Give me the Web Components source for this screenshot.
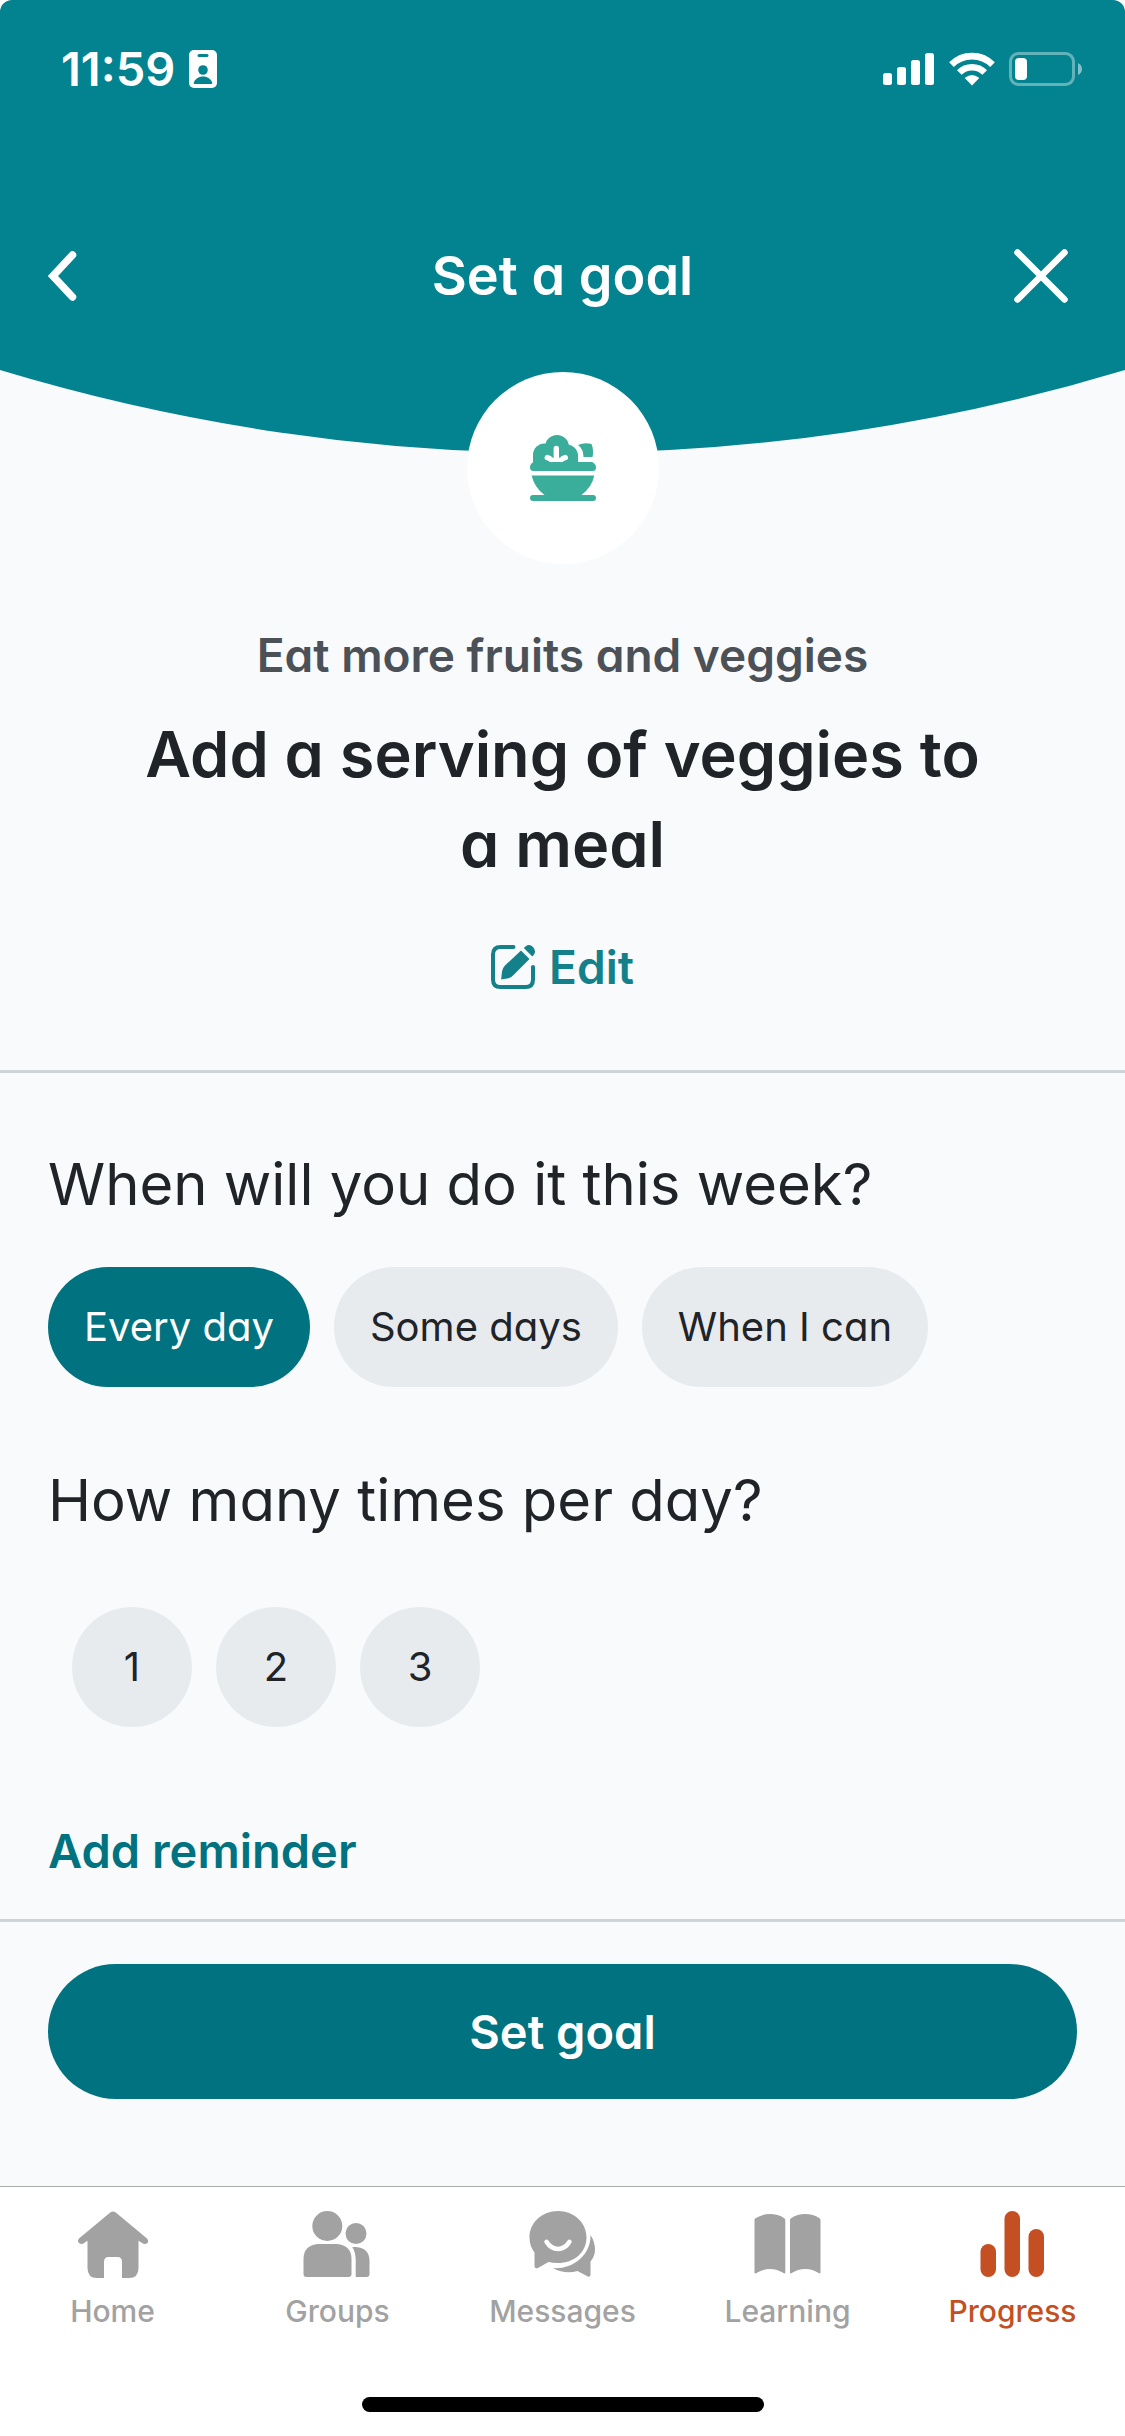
<!DOCTYPE html>
<html lang="en">
<head>
<meta charset="utf-8">
<meta name="viewport" content="width=device-width, initial-scale=1">
<title>Set a goal</title>
<style>
  :root {
    --teal-header: #03838f;
    --teal-dark: #01727f;
    --teal-link: #14808a;
    --ink: #202327;
    --muted: #4b5157;
    --surface: #f8fafc;
    --chip: #e8ebee;
    --rule: #d0d3d7;
    --tab: #a2a2a2;
    --accent: #c44f22;
  }
  body {
    margin: 0;
    background: #fff;
    color: var(--ink);
    font-family: Inter, "Liberation Sans", sans-serif;
    font-feature-settings: "cv11";
  }
</style>
</head>
<body>
<goal-app></goal-app>

<template id="t-app">
  <style>
    :host { display: flex; flex-direction: column; min-height: 100vh; }
    main { flex: 1; display: flex; flex-direction: column; background: var(--surface); }
    .plan { display: flex; flex-direction: column; align-items: flex-start; padding: 75px 48px 38px; border-top: 3px solid var(--rule); }
    .times { margin-top: 77px; }
    .reminder { margin-top: 94px; border: 0; padding: 0; background: none; color: var(--teal-dark); font: 600 47px/60px Inter, sans-serif; font-feature-settings: inherit; }
    .action { padding: 42px 48px 87px; border-top: 3px solid var(--rule); }
    .submit { display: block; width: 100%; height: 135px; border: 0; border-radius: 68px; background: var(--teal-dark); color: #fff; font: 600 47px/60px Inter, sans-serif; font-feature-settings: inherit; }
  </style>
  <goal-header>Set a goal</goal-header>
  <main>
    <goal-summary>
      <span slot="category">Eat more fruits and veggies</span>
      <span slot="title">Add a serving of veggies to a meal</span>
    </goal-summary>
    <section class="plan">
      <choice-group name="when" options="Every day|Some days|When I can" selected="Every day">When will you do it this week?</choice-group>
      <choice-group class="times" round name="times" options="1|2|3">How many times per day?</choice-group>
      <button class="reminder" type="button">Add reminder</button>
    </section>
    <section class="action"><button class="submit" type="button">Set goal</button></section>
  </main>
  <tab-bar></tab-bar>
</template>

<template id="t-status">
  <style>
    :host { display: flex; align-items: center; justify-content: space-between; height: 138px; padding: 0 42px 0 61px; color: #fff; font: 600 47px/60px Inter, sans-serif; }
    div { display: flex; align-items: center; gap: 14px; }
    svg { display: block; }
  </style>
  <div>
    <span>11:59</span>
    <svg width="28" height="38" viewBox="0 0 28 38" aria-hidden="true">
      <rect width="28" height="38" rx="5" fill="#fff"/>
      <rect x="8.5" y="4" width="11" height="3" rx="1.5" fill="#03838f"/>
      <circle cx="14" cy="20" r="4.8" fill="#03838f"/>
      <path d="M5.5 34c-.6 0-1-.6-.8-1.200C6 29 9.500 26.500 14 26.500s8 2.500 9.300 6.300c.2.6-.2 1.200-.8 1.200z" fill="#03838f"/>
    </svg>
  </div>
  <div>
    <svg width="52" height="34" viewBox="0 0 52 34" fill="#fff" aria-hidden="true">
      <rect x="0" y="21" width="9" height="12" rx="2.500"/>
      <rect x="14" y="15" width="9" height="18" rx="2.500"/>
      <rect x="28" y="8" width="9" height="25" rx="2.500"/>
      <rect x="42" y="1" width="9" height="32" rx="2.500"/>
    </svg>
    <svg width="46" height="34" viewBox="0 0 46 34" aria-hidden="true">
      <g fill="none" stroke="#fff" stroke-width="6.600">
        <path d="M2.500 12.600A29 29 0 0 1 43.500 12.600"/>
        <path d="M10.300 20.500A18 18 0 0 1 35.700 20.500"/>
      </g>
      <path d="M23 33.500 16.200 26.600Q15.700 26 16.300 25.500 23 20.500 29.700 25.500 30.300 26 29.800 26.600Z" fill="#fff"/>
    </svg>
    <svg width="74" height="34" viewBox="0 0 74 34" aria-hidden="true">
      <rect x="1.500" y="1.500" width="63" height="31" rx="8" fill="none" stroke="#fff" stroke-opacity=".38" stroke-width="3"/>
      <rect x="6" y="6" width="12" height="22" rx="4" fill="#fff"/>
      <path d="M69 11Q73 13 73 17T69 23Z" fill="#fff" fill-opacity=".5"/>
    </svg>
  </div>
</template>

<template id="t-header">
  <style>
    :host { display: block; background: linear-gradient(var(--teal-header), var(--teal-header)) top / 100% 370px no-repeat, var(--surface); border-radius: 12px 12px 0 0; overflow: hidden; }
    nav { display: grid; grid-template-columns: 1fr auto 1fr; align-items: center; height: 84px; margin-top: 96px; padding: 0 48px; color: #fff; }
    h1 { margin: 0; font: 600 54px/72px Inter, sans-serif; font-feature-settings: inherit; }
    button { display: flex; border: 0; padding: 0; background: none; color: inherit; justify-self: start; }
    button:last-child { justify-self: end; padding-right: 8px; }
    .curve { display: block; width: 100%; height: 83px; margin-top: 52px; fill: var(--teal-header); }
  </style>
  <status-bar></status-bar>
  <nav>
    <button type="button" aria-label="Back">
      <svg width="30" height="50" viewBox="0 0 30 50" fill="none" stroke="#fff" stroke-width="7.500" stroke-linecap="round"><path d="M24.500 4 5 25 24.500 46"/></svg>
    </button>
    <h1><slot></slot></h1>
    <button type="button" aria-label="Close">
      <svg width="56" height="56" viewBox="0 0 56 56" fill="none" stroke="#fff" stroke-width="6.500" stroke-linecap="round"><path d="M4.500 4.500 51.500 51.500M51.500 4.500 4.500 51.500"/></svg>
    </button>
  </nav>
  <svg class="curve" viewBox="0 0 1125 83" preserveAspectRatio="none" aria-hidden="true"><path d="M0 0A1947 1947 0 0 0 1125 0Z"/></svg>
</template>

<template id="t-summary">
  <style>
    :host { display: flex; flex-direction: column; align-items: center; padding: 0 120px 73px; text-align: center; }
    .badge { display: grid; place-items: center; width: 192px; height: 192px; margin-top: -81px; border-radius: 50%; background: #fff; z-index: 1; }
    p { margin: 61px 0 24px; color: var(--muted); font: 600 46px/60px Inter, sans-serif; }
    h2 { margin: 0; max-width: 860px; font: 600 63px/90px Inter, sans-serif; }
    button { display: flex; align-items: center; gap: 13px; margin-top: 48px; border: 0; padding: 0; background: none; color: var(--teal-link); font: 600 46px/60px Inter, sans-serif; }
    p, h2, button { font-feature-settings: inherit; }
  </style>
  <div class="badge">
    <svg width="66" height="66" viewBox="0 0 66 66" fill="#3aad9b" aria-hidden="true">
      <circle cx="27" cy="12" r="12"/>
      <circle cx="14.500" cy="20" r="11.500"/>
      <circle cx="36.500" cy="21" r="11.500"/>
      <path d="M3 20H48V27H3Z"/>
      <path d="M3.500 27H62Q66 29 66 32.500 66 36 62.500 36H3.500Q0 36 0 32.500 0 28.500 3.500 27Z"/>
      <path d="M48 10Q54.500 7 61.500 9 64 15 62.500 22H53.500Q53.500 14 48 10Z"/>
      <path d="M1.700 40.500H64.300Q62 52 51.500 60H14.500Q4 52 1.700 40.500Z"/>
      <rect y="60" width="66" height="6" rx="3"/>
      <g stroke="#fff" stroke-width="5.400" stroke-linecap="round" fill="none"><path d="M26.300 13.500V23"/><path d="M17.300 22.500 21.500 24.400M35.300 22.500 31 24.400"/></g>
      <path d="M19 27 22 21.500 26.300 24 30.600 21.500 33.500 27Z" fill="#fff"/>
      <path d="M22.500 18.500 23.600 23 21.500 22ZM30.200 18.500 29 23 31 22Z"/>
    </svg>
  </div>
  <p><slot name="category"></slot></p>
  <h2><slot name="title"></slot></h2>
  <button type="button">
    <svg width="45" height="45" viewBox="0 0 45 45" aria-hidden="true">
      <path d="M22.500 2H9.500Q2 2 2 9.500V34.500Q2 42 9.500 42H34.500Q42 42 42 34.500V22" fill="none" stroke="currentColor" stroke-width="4" stroke-linecap="round"/>
      <path d="M10.200 34.500 11 26.500Q11.500 23 14 20.500L30 5.500 38.500 14 23 29.500Q20.500 32.500 17.500 33.300Z" fill="currentColor"/>
      <path d="M32.800 3 34.500 1.500Q38.500-1.500 42 2 45.500 6 43 9.500L41.300 11.500Z" fill="currentColor"/>
    </svg>
    Edit
  </button>
</template>

<template id="t-choice">
  <style>
    :host { display: block; }
    fieldset { margin: 0; border: 0; padding: 0; min-width: 0; }
    legend { padding: 0; font: 400 58px/72px Inter, sans-serif; font-feature-settings: inherit; }
    .row { display: flex; flex-wrap: wrap; gap: 24px; padding-top: 47px; }
    label { position: relative; display: grid; place-items: center; height: 120px; padding: 0 36px; border-radius: 60px; background: var(--chip); font: 400 40px/60px Inter, sans-serif; font-feature-settings: inherit; }
    input { position: absolute; inset: 0; margin: 0; opacity: 0; }
    label:has(input:checked) { background: var(--teal-dark); color: #fff; }
    :host([round]) .row { padding: 71px 24px 0; }
    :host([round]) label { width: 120px; padding: 0; }
  </style>
  <fieldset><legend><slot></slot></legend><div class="row"></div></fieldset>
</template>

<template id="t-tab">
  <style>
    :host { flex: 1; min-width: 0; }
    a { display: flex; flex-direction: column; align-items: center; gap: 14px; color: var(--tab); text-decoration: none; font: 500 30px/36px Inter, sans-serif; font-feature-settings: normal; }
    a[aria-current] { color: var(--accent); }
    svg { display: block; fill: currentColor; }
  </style>
  <a href="#"><svg width="72" height="68" viewBox="0 0 72 68" aria-hidden="true"></svg><slot></slot></a>
</template>

<template id="t-tabs">
  <style>
    :host { display: block; border-top: 1px solid #a9adb0; background: #fff; padding-bottom: 24px; }
    nav { display: flex; padding: 24px 0 68px; }
    .home-indicator { width: 402px; height: 15px; margin: 0 auto; border-radius: 8px; background: #000; }
  </style>
  <nav>
    <tab-item icon="home">Home</tab-item>
    <tab-item icon="groups">Groups</tab-item>
    <tab-item icon="messages">Messages</tab-item>
    <tab-item icon="learning">Learning</tab-item>
    <tab-item icon="progress" current>Progress</tab-item>
  </nav>
  <div class="home-indicator"></div>
</template>

<script>
  class TemplateElement extends HTMLElement {
    connectedCallback() {
      if (this.shadowRoot) return;
      const root = this.attachShadow({ mode: 'open' });
      root.append(document.getElementById(this.constructor.template).content.cloneNode(true));
      this.ready(root);
    }
    ready() {}
  }

  const TAB_ICONS = {
    home: '<path d="M33.200 1.500Q36-.5 38.800 1.500L70 27.500Q72 30 70.500 32 68 34.300 64.800 31.800L61.500 29.800V57Q61.500 67 52 67H45V51Q45 46 40.500 46H31.500Q27 46 27 51V67H20Q10.500 67 10.500 57V29.800L7.500 31.800Q4.500 34.300 2 32 0 30 2 27.500Z"/>',
    groups: '<circle cx="25.300" cy="15" r="15"/><path d="M16 33H35Q49.500 34.500 49.500 48V63Q49.500 66 46.500 66H4.500Q1.500 66 1.500 63V48Q1.500 34.500 16 33Z"/><circle cx="54" cy="22.500" r="10.500"/><path d="M50.300 36H54Q67.500 37 67.500 50V63Q67.500 66 64.500 66H53.700V49Q53.700 41.500 50.300 36Z"/>',
    messages: '<path d="M31 0C47 0 59.500 11.500 59.500 26.500S47 52 31 52Q26 52 21.500 51L10.500 57.200Q7.500 58 7.500 55V41.500Q2.500 35 2.500 26.500C2.500 11.500 15 0 31 0Z"/><path d="M19.500 30.800Q24 38 31 38T42.500 30.800" fill="none" stroke="#fff" stroke-width="4.500" stroke-linecap="round"/><path d="M63.500 24Q68 31 68 38.500 68 45 63.500 50.500V63.500Q63.500 66.300 60.800 65.500L50.500 60Q38 63.500 26 57.200C46 58.500 64 44 63.500 24Z"/>',
    learning: '<path d="M2.500 9Q2.500 8 3.500 7.200 10 3 18 3 26 3 32.300 7.200 33.300 8 33.300 9V61.500Q33.300 63 32 62.300 25 58 18 58 11 58 4 62.300 2.500 63 2.500 61.500Z"/><path d="M38 9Q38 8 39 7.200 45.500 3 53.300 3 61 3 67.500 7.200 68.500 8 68.500 9V61.500Q68.500 63 67.200 62.300 60.500 58 53.300 58 46 58 39.300 62.300 38 63 38 61.500Z"/>',
    progress: '<rect x="3.500" y="33" width="15.500" height="33" rx="7.750"/><rect x="27.500" width="15.500" height="66" rx="7.750"/><rect x="51.500" y="18" width="15.500" height="48" rx="7.750"/>'
  };

  customElements.define('status-bar', class extends TemplateElement { static template = 't-status'; });
  customElements.define('goal-header', class extends TemplateElement { static template = 't-header'; });
  customElements.define('goal-summary', class extends TemplateElement { static template = 't-summary'; });

  customElements.define('choice-group', class extends TemplateElement {
    static template = 't-choice';
    ready(root) {
      const row = root.querySelector('.row');
      for (const text of this.getAttribute('options').split('|')) {
        const label = document.createElement('label');
        const input = document.createElement('input');
        input.type = 'radio';
        input.name = this.getAttribute('name');
        input.value = text;
        input.checked = text === this.getAttribute('selected');
        label.append(input, text);
        row.append(label);
      }
    }
  });

  customElements.define('tab-item', class extends TemplateElement {
    static template = 't-tab';
    ready(root) {
      root.querySelector('svg').innerHTML = TAB_ICONS[this.getAttribute('icon')];
      if (this.hasAttribute('current')) root.querySelector('a').setAttribute('aria-current', 'page');
    }
  });

  customElements.define('tab-bar', class extends TemplateElement { static template = 't-tabs'; });
  customElements.define('goal-app', class extends TemplateElement { static template = 't-app'; });
</script>
</body>
</html>
